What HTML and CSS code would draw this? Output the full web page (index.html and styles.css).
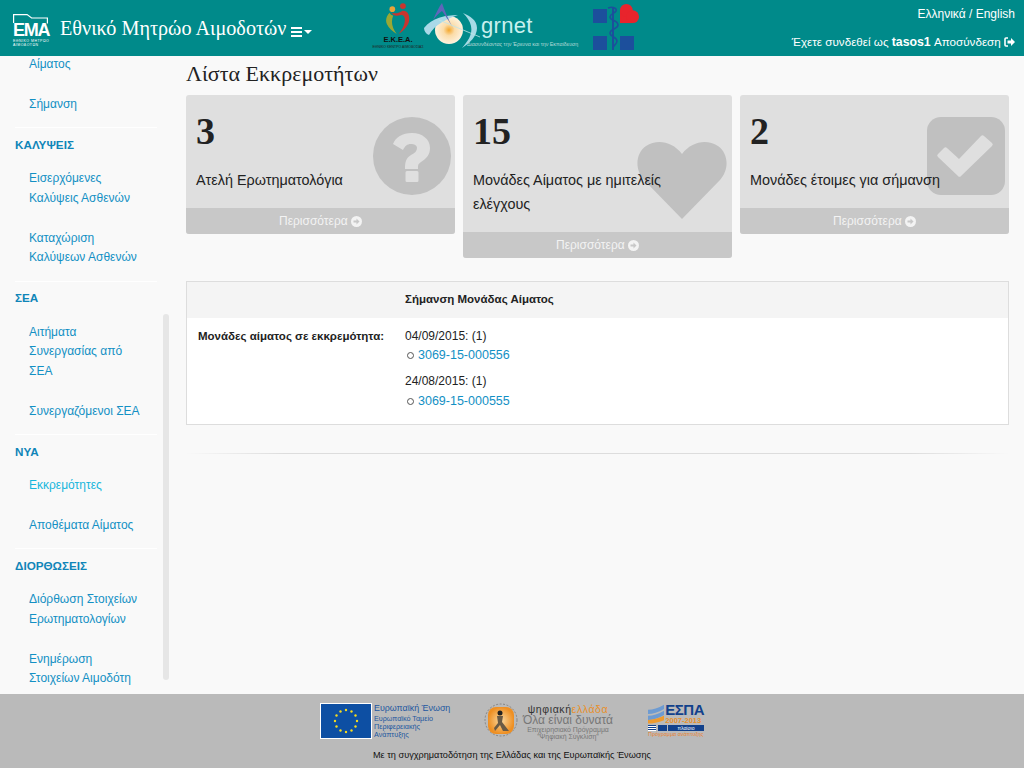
FILE: index.html
```html
<!DOCTYPE html>
<html lang="el">
<head>
<meta charset="utf-8">
<title>Εθνικό Μητρώο Αιμοδοτών</title>
<link rel="stylesheet" href="styles.css">
</head>
<body>
<header class="topbar">
  <div class="brand">
    <div class="ema-logo">
      <svg class="ema-frame" width="35" height="10" viewBox="0 0 35 10"><path d="M.6 9V.6h13.500l4.500 3.400h15.800v5.500" fill="none" stroke="#fff" stroke-width="1.200"/></svg>
      <span class="ema-word">EMA</span>
      <span class="ema-small">ΕΘΝΙΚΟ ΜΗΤΡΩΟ<br>ΑΙΜΟΔΟΤΩΝ</span>
    </div>
    <span class="brand-title">Εθνικό Μητρώο Αιμοδοτών</span>
    <svg class="menu-icon" width="21" height="10" viewBox="0 0 21 10"><path d="M0 0h11v2H0zM0 4h11v2H0zM0 8h11v2H0z" fill="#fff"/><path d="M13 3h8l-4 4z" fill="#fff"/></svg>
  </div>
  <div class="partners">
    <div class="ekea">
      <svg width="25" height="31" viewBox="0 0 28 35">
        <circle cx="7" cy="7" r="3.200" fill="#e8a33a"/><circle cx="19" cy="3.500" r="3.300" fill="#c8352f"/>
        <path d="M4 11C0 15-1 20 1 24c2 4 6 8 11 11C7 28 5 22 8 14c-2 0-3-1-4-3z" fill="#9aa834"/>
        <path d="M6 11c4 1 8 1 12-2 6-1 9 5 8 11-1 6-6 11-12 15 5-6 8-12 7-18-1-4-3-4-7-3-3 1-6 0-8-3z" fill="#c8352f"/>
      </svg>
      <span class="ekea-name">Ε.Κ.Ε.Α.</span>
      <span class="ekea-sub">ΕΘΝΙΚΟ ΚΕΝΤΡΟ ΑΙΜΟΔΟΣΙΑΣ</span>
    </div>
    <div class="grnet">
      <svg width="60" height="50" viewBox="0 0 60 50">
        <defs><radialGradient id="sun"><stop offset="0" stop-color="#f4a72c"/><stop offset=".4" stop-color="#fbdca8"/><stop offset="1" stop-color="#fdf1dd"/></radialGradient></defs>
        <circle cx="26" cy="28" r="14" fill="url(#sun)"/>
        <path d="M1 26C9 16 22 13 35 13 24 17 12 22 6 33 3 32 1 29 1 26z" fill="#a9d9e8"/>
        <path d="M10 18C13 11 16 5 19 1c2 6 6 16 12 27C26 19 22 13 19 9c-3 2-6 5-9 9z" fill="#5f66ba"/>
        <path d="M40 11c7 3 14 7 14 15 0 8-7 15-15 20 5-6 11-13 9-22-1-5-4-9-8-13z" fill="#a7dbe6"/>
        <path d="M16 18l41 17" stroke="#bfe3e6" stroke-width=".8"/>
      </svg>
      <div class="grnet-text">
        <span class="grnet-name">grnet</span>
        <span class="grnet-sub">Διασυνδέοντας την Έρευνα και την Εκπαίδευση</span>
      </div>
    </div>
    <svg class="moh" width="48" height="48" viewBox="0 0 48 48">
      <path d="M0 6h14v14H0zM0 33h14v14H0zM27 33h14v14H27z" fill="#1c4f9c"/>
      <path d="M20 4v43" fill="none" stroke="#1c4f9c" stroke-width="2"/>
      <path d="M15 5c6-2 9 1 8 3-2 3-6 3-6 6 0 4 8 3 8 8 0 4-8 4-8 8 0 4 7 4 7 8 0 3-3 4-4 7" fill="none" stroke="#1c4f9c" stroke-width="1.500"/>
      <g fill="#e8242c"><rect x="27" y="7.350" width="12.700" height="12.700"/><circle cx="33.350" cy="7.350" r="6.350"/><circle cx="39.700" cy="13.700" r="6.350"/></g>
    </svg>
  </div>
  <div class="user-area">
    <div class="lang"><a href="#">Ελληνικά</a> / <a href="#">English</a></div>
    <div class="session">Έχετε συνδεθεί ως <b>tasos1</b> <a href="#">Αποσύνδεση</a>
      <svg class="logout-icon" width="11" height="10" viewBox="0 0 11 10"><path d="M4 1H2a1 1 0 0 0-1 1v6a1 1 0 0 0 1 1h2" fill="none" stroke="#fff" stroke-width="1.600"/><path d="M3.500 3.500H7V1l4 4-4 4V6.500H3.500z" fill="#fff"/></svg>
    </div>
  </div>
</header>

<div class="layout">
  <nav class="sidebar">
    <ul class="menu first-menu">
      <li><a href="#">Αίματος</a></li>
      <li><a href="#">Σήμανση</a></li>
    </ul>
    <h4 class="menu-head">ΚΑΛΥΨΕΙΣ</h4>
    <ul class="menu">
      <li><a href="#">Εισερχόμενες<br>Καλύψεις Ασθενών</a></li>
      <li><a href="#">Καταχώριση<br>Καλύψεων Ασθενών</a></li>
    </ul>
    <h4 class="menu-head">ΣΕΑ</h4>
    <ul class="menu">
      <li><a href="#">Αιτήματα<br>Συνεργασίας από<br>ΣΕΑ</a></li>
      <li><a href="#">Συνεργαζόμενοι ΣΕΑ</a></li>
    </ul>
    <h4 class="menu-head">ΝΥΑ</h4>
    <ul class="menu">
      <li><a href="#" class="active">Εκκρεμότητες</a></li>
      <li><a href="#">Αποθέματα Αίματος</a></li>
    </ul>
    <h4 class="menu-head">ΔΙΟΡΘΩΣΕΙΣ</h4>
    <ul class="menu">
      <li><a href="#">Διόρθωση Στοιχείων<br>Ερωτηματολογίων</a></li>
      <li><a href="#">Ενημέρωση<br>Στοιχείων Αιμοδότη</a></li>
    </ul>
    <div class="scroll-thumb"></div>
  </nav>

  <main class="content">
    <h1 class="page-title">Λίστα Εκκρεμοτήτων</h1>
    <section class="cards">
      <article class="card">
        <div class="card-body">
          <div class="card-num">3</div>
          <p class="card-text">Ατελή Ερωτηματολόγια</p>
          <svg class="card-icon" width="78" height="78" viewBox="0 0 78 78"><circle cx="39" cy="39" r="39" fill="#c0c0c0"/><path d="M20 27C23 20 29 16 39 16c10 0 18 6 18 15 0 7-4 11-9 14-3 2-3 3-3 7H32c0-7 1-11 6-14 4-2 6-4 6-7 0-3-3-4-6-4-4 0-6 2-8 6zM34 54h10a1.500 1.500 0 0 1 1.500 1.500v8a1.500 1.500 0 0 1-1.500 1.500H34a1.500 1.500 0 0 1-1.500-1.500v-8A1.500 1.500 0 0 1 34 54z" fill="#dfdfdf"/></svg>
        </div>
        <a class="card-more" href="#">Περισσότερα <svg class="more-icon" width="11" height="11" viewBox="0 0 11 11"><circle cx="5.500" cy="5.500" r="5.500" fill="#f3f3f3"/><path d="M2.500 4.500h3V2.500l3 3-3 3V6.500h-3z" fill="#c8c8c8"/></svg></a>
      </article>
      <article class="card">
        <div class="card-body">
          <div class="card-num">15</div>
          <p class="card-text">Μονάδες Αίματος με ημιτελείς ελέγχους</p>
          <svg class="card-icon heart" width="90" height="78" viewBox="0 0 90 78"><path d="M45 78L7 39C-3 28-1 12 9 5 20-2 35 0 45 13 55 0 70-2 81 5c10 7 12 23 2 34z" fill="#c0c0c0"/></svg>
        </div>
        <a class="card-more" href="#">Περισσότερα <svg class="more-icon" width="11" height="11" viewBox="0 0 11 11"><circle cx="5.500" cy="5.500" r="5.500" fill="#f3f3f3"/><path d="M2.500 4.500h3V2.500l3 3-3 3V6.500h-3z" fill="#c8c8c8"/></svg></a>
      </article>
      <article class="card">
        <div class="card-body">
          <div class="card-num">2</div>
          <p class="card-text">Μονάδες έτοιμες για σήμανση</p>
          <svg class="card-icon" width="78" height="78" viewBox="0 0 78 78"><rect width="78" height="78" rx="14" fill="#c0c0c0"/><path d="M11 37l6-6a2 2 0 0 1 3 0l12 11 22-23a2 2 0 0 1 3 0l8 7a2 2 0 0 1 0 3L34 59a2 2 0 0 1-3 0L11 40a2 2 0 0 1 0-3z" fill="#dfdfdf"/></svg>
        </div>
        <a class="card-more" href="#">Περισσότερα <svg class="more-icon" width="11" height="11" viewBox="0 0 11 11"><circle cx="5.500" cy="5.500" r="5.500" fill="#f3f3f3"/><path d="M2.500 4.500h3V2.500l3 3-3 3V6.500h-3z" fill="#c8c8c8"/></svg></a>
      </article>
    </section>

    <section class="panel">
      <div class="panel-row panel-head">
        <div class="col-label"></div>
        <div class="col-value"><b>Σήμανση Μονάδας Αίματος</b></div>
      </div>
      <div class="panel-row panel-main">
        <div class="col-label"><b>Μονάδες αίματος σε εκκρεμότητα:</b></div>
        <div class="col-value">
          <div class="date-group">
            <div>04/09/2015: (1)</div>
            <ul class="unit-list"><li><a href="#">3069-15-000556</a></li></ul>
          </div>
          <div class="date-group">
            <div>24/08/2015: (1)</div>
            <ul class="unit-list"><li><a href="#">3069-15-000555</a></li></ul>
          </div>
        </div>
      </div>
    </section>
    <div class="fade-rule"></div>
  </main>
</div>

<footer class="footer">
  <div class="footer-logos">
    <div class="eu-logo">
      <svg class="eu-flag" width="52" height="36" viewBox="0 0 52 36">
        <rect x=".5" y=".5" width="51" height="35" fill="#0d4fa3" stroke="#fff"/>
        <g fill="#f7dc1e"><circle cx="26" cy="7" r="1.200"/><circle cx="31.500" cy="8.500" r="1.200"/><circle cx="35.500" cy="12.500" r="1.200"/><circle cx="37" cy="18" r="1.200"/><circle cx="35.500" cy="23.500" r="1.200"/><circle cx="31.500" cy="27.500" r="1.200"/><circle cx="26" cy="29" r="1.200"/><circle cx="20.500" cy="27.500" r="1.200"/><circle cx="16.500" cy="23.500" r="1.200"/><circle cx="15" cy="18" r="1.200"/><circle cx="16.500" cy="12.500" r="1.200"/><circle cx="20.500" cy="8.500" r="1.200"/></g>
      </svg>
      <div class="eu-text">
        <div class="eu-title">Ευρωπαϊκή Ένωση</div>
        <div class="eu-sub">Ευρωπαϊκό Ταμείο<br>Περιφερειακής<br>Ανάπτυξης</div>
      </div>
    </div>
    <div class="de-logo">
      <svg width="34" height="34" viewBox="0 0 34 34">
        <defs><radialGradient id="glow"><stop offset="0" stop-color="#fbd9a0"/><stop offset="1" stop-color="#ee8f22"/></radialGradient></defs>
        <circle cx="17" cy="17" r="16" fill="none" stroke="#777" stroke-dasharray="2 1.500" stroke-width=".8"/>
        <rect x="4" y="4" width="26" height="27" rx="8" fill="url(#glow)"/>
        <circle cx="16" cy="10" r="2.500" fill="#222"/>
        <path d="M13 13l6 0-1 6 7 9h-6l-3-6-5 6-1-3 4-5z" fill="#6a5a45"/>
      </svg>
      <div class="de-text">
        <div class="de-a">ψηφιακή<span>ελλάδα</span></div>
        <div class="de-b">Όλα είναι δυνατά</div>
        <div class="de-c">Επιχειρησιακό Πρόγραμμα<br>"Ψηφιακή Σύγκλιση"</div>
      </div>
    </div>
    <div class="espa-logo">
      <div class="espa-top">
        <svg width="19" height="22" viewBox="0 0 19 22"><path d="M0 6C6 6 12 4 19 0v5C12 9 6 11 0 11zM0 13c6 0 12-2 19-6v5c-7 4-13 6-19 6z" fill="#6d9bd2"/><path d="M0 18c6 0 12-2 19-5v5c-7 3-13 4-19 4z" fill="#ee9a2e"/></svg>
        <div>
          <div class="espa-name">ΕΣΠΑ</div>
          <div class="espa-years">2007-2013</div>
        </div>
      </div>
      <div class="espa-bar"><em></em><i></i><span>πλαίσιο</span></div>
      <div class="espa-foot">Πρόγραμμα ανάπτυξης</div>
    </div>
  </div>
  <p class="footer-note">Με τη συγχρηματοδότηση της Ελλάδας και της Ευρωπαϊκής Ένωσης</p>
</footer>
</body>
</html>
```

FILE: styles.css
```css
* { box-sizing: border-box; }
html, body { height: 100%; }
body {
  margin: 0;
  height: 768px;
  overflow: hidden;
  display: flex;
  flex-direction: column;
  background: #f9f9f9;
  font-family: "Liberation Sans", Arial, sans-serif;
  font-size: 12px;
  line-height: 1.5;
  color: #222;
}
a { color: #1390c4; text-decoration: none; }

/* Header */
.topbar {
  height: 56px;
  flex: none;
  display: flex;
  background: #008a8a;
  color: #fff;
}
.brand { width: 372px; flex: none; display: flex; align-items: flex-start; padding: 14px 0 0 13px; }
.ema-logo { width: 34px; height: 32px; position: relative; flex: none; color: #fff; }
.ema-frame { position: absolute; left: 0; top: 0; }
.ema-word {
  position: absolute; left: 0; top: 9px; width: 36px;
  font-size: 18px; line-height: 14px; font-weight: 700; letter-spacing: -1.300px;
}
.ema-small { position: absolute; left: 0; top: 25px; font-size: 3.500px; line-height: 4px; letter-spacing: .5px; white-space: nowrap; }
.brand-title {
  margin-left: 13px;
  font-family: "Liberation Serif", "Times New Roman", serif;
  font-size: 20.200px;
  line-height: 28px;
  white-space: nowrap;
}
.menu-icon { margin: 13px 0 0 4px; flex: none; }
.partners { width: 268px; display: flex; align-items: flex-start; flex: none; }
.ekea { width: 52px; flex: none; display: flex; flex-direction: column; align-items: center; padding-top: 3px; }
.ekea-name { font-size: 7.500px; line-height: 7px; font-weight: 700; color: #111; margin-top: 2px; }
.ekea-sub { font-size: 3.500px; line-height: 5px; margin-top: 2px; color: #222; white-space: nowrap; }
.grnet { margin-left: -1px; padding-top: 2px; flex: none; width: 170px; position: relative; }
.grnet-text { position: absolute; left: 44px; top: 13px; width: 125px; }
.grnet-name { display: block; margin-left: 14px; color: #c9f1ef; font-size: 22px; line-height: 26px; letter-spacing: .3px; }
.grnet-sub { display: block; margin-top: 1px; color: #b7dcd9; font-size: 5.300px; line-height: 8px; white-space: nowrap; }
.moh { margin: 3px 0 0 0; flex: none; }
.user-area { flex: 1; padding: 5px 9px 0 0; text-align: right; font-size: 12px; }
.user-area a { color: #fff; }
.lang { line-height: 18px; }
.session { margin-top: 10px; line-height: 18px; font-size: 11.650px; }
.session b { font-size: 12.300px; }
.logout-icon { vertical-align: -1px; }

/* Layout */
.layout { flex: 1; display: flex; min-height: 0; }
.sidebar {
  width: 170px; flex: none; position: relative; overflow: hidden;
  padding: 0 13px 0 15px;
}
.menu { list-style: none; margin: 0; padding: 0; border-bottom: 1px solid #fff; }
.menu:last-of-type { border-bottom: 0; }
.menu li { padding: 0 0 20.500px 14px; line-height: 19.500px; }
.menu li:last-child { padding-bottom: 12.750px; }
.menu a { display: block; white-space: nowrap; }
.menu a.active { color: #17b6dc; }
.first-menu { margin-top: -1px; }
.menu-head {
  margin: 0; padding: 7.750px 0 15.250px; line-height: 18px;
  font-size: 11.700px; font-weight: 700; color: #1085b8;
}
.scroll-thumb {
  position: absolute; right: 1px; top: 258px; width: 6px; height: 366px;
  background: #e6e6e6; border-radius: 3px;
}
.content { flex: 1; padding: 0 15px 0 16px; min-width: 0; }
.page-title {
  margin: 3px 0 7px; height: 29px;
  font-family: "Liberation Serif", "Times New Roman", serif;
  font-size: 22px; font-weight: 400; line-height: 29px; color: #222;
}
.cards { display: flex; align-items: flex-start; gap: 8px; }
.card { flex: 1; min-width: 0; background: #dfdfdf; border-radius: 3px; overflow: hidden; }
.card-body { position: relative; padding: 15px 10px 16px; }
.card-num {
  font-family: "Liberation Serif", "Times New Roman", serif;
  font-size: 38px; font-weight: 700; line-height: 42px; color: #222;
}
.card-text { position: relative; margin: 16px 8px 0 0; font-size: 14.400px; line-height: 24px; color: #222; z-index: 1; }
.card-icon { position: absolute; right: 4px; top: 22px; }
.card-icon.heart { top: 46px; right: 5px; }
.card-more {
  display: block; height: 26px; line-height: 26px; text-align: center;
  background: #c8c8c8; color: #f3f3f3; font-size: 12px;
}
.more-icon { vertical-align: -2px; }
.panel { margin-top: 23px; background: #fff; border: 1px solid #ddd; }
.panel-row { display: flex; }
.panel b { font-size: 11.500px; }
.col-label { width: 218px; padding-left: 11px; flex: none; }
.col-value { flex: 1; }
.panel-head { height: 36px; padding-bottom: 1px; align-items: center; background: #f4f4f4; }
.panel-main { padding: 8.500px 0 13px; line-height: 19.500px; }
.date-group + .date-group { margin-top: 6.500px; }
.unit-list { margin: 0; padding: 0 0 0 2px; list-style: none; }
.unit-list li { display: flex; align-items: center; gap: 4px; }
.unit-list li::before { content: ""; width: 5px; height: 5px; border: 1px solid #555; border-radius: 50%; }
.unit-list a { font-size: 12.500px; }
.fade-rule {
  height: 1px; margin-top: 28px;
  background: linear-gradient(to right, rgba(221,221,221,0), #ddd 12%, #ddd 88%, rgba(221,221,221,0));
}

/* Footer */
.footer { height: 74px; flex: none; background: #bababa; text-align: center; }
.footer-logos { display: flex; height: 54px; padding: 9px 0 0 320px; align-items: flex-start; text-align: left; }
.eu-logo { display: flex; width: 164px; flex: none; }
.eu-text { margin-left: 2px; color: #1d57a0; }
.eu-title { font-size: 8.900px; line-height: 10px; }
.eu-sub { font-size: 7.200px; line-height: 8px; margin-top: 2px; }
.de-logo { display: flex; width: 164px; flex: none; }
.de-text { margin-left: 4px; text-align: center; width: 92px; color: #777; }
.de-a { font-size: 10.500px; line-height: 10px; margin-top: 1px; color: #333; letter-spacing: .6px; }
.de-a span { color: #e8902a; }
.de-b { font-size: 12px; line-height: 12px; }
.de-c { font-size: 6.900px; line-height: 7px; }
.espa-logo { width: 56px; flex: none; }
.espa-top { display: flex; gap: 1px; }
.espa-name { font-size: 15px; font-weight: 700; line-height: 13px; color: #12418c; letter-spacing: -.5px; }
.espa-years { font-size: 7.500px; line-height: 9px; color: #e8902a; font-weight: 700; }
.espa-bar { display: flex; height: 6px; }
.espa-bar em { width: 8px; margin-right: 2px; background: repeating-linear-gradient(to bottom, #12418c 0 1px, #fff 1px 2px); }
.espa-bar i { width: 9px; margin-right: 1px; background: #12418c; }
.espa-bar span { flex: 1; background: #12418c; color: #fff; font-size: 5px; line-height: 6px; text-align: center; white-space: nowrap; }
.espa-foot { font-size: 5.400px; line-height: 7px; color: #e8802a; white-space: nowrap; }
.footer-note { margin: 0; font-size: 9.160px; line-height: 14px; color: #111; }
```
